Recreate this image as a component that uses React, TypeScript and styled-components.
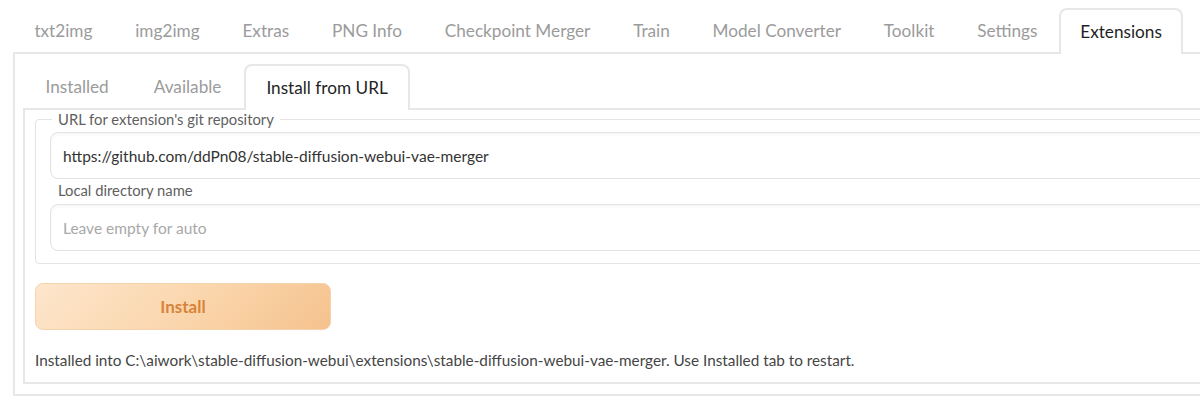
import React, { useState } from 'react';
import styled, { createGlobalStyle } from 'styled-components';

const GlobalStyle = createGlobalStyle`
  body {
    margin: 0;
    background: #ffffff;
    overflow: hidden;
    font-family: 'Lato', 'Liberation Sans', sans-serif;
  }
  * { box-sizing: border-box; }
`;

const topTabs = [
  'txt2img',
  'img2img',
  'Extras',
  'PNG Info',
  'Checkpoint Merger',
  'Train',
  'Model Converter',
  'Toolkit',
  'Settings',
  'Extensions',
];

const subTabs = ['Installed', 'Available', 'Install from URL'];

export default function App() {
  const [tab, setTab] = useState('Extensions');
  const [subTab, setSubTab] = useState('Install from URL');
  const [url, setUrl] = useState(
    'https://github.com/ddPn08/stable-diffusion-webui-vae-merger'
  );
  const [dirName, setDirName] = useState('');

  return (
    <>
      <GlobalStyle />
      <Page>
        <TabBar>
          {topTabs.map((t) => (
            <TabButton
              key={t}
              $active={t === tab}
              $pad={19.4}
              onClick={() => setTab(t)}
            >
              {t}
            </TabButton>
          ))}
        </TabBar>
        <OuterPanel>
          <TabBar>
            {subTabs.map((t) => (
              <TabButton
                key={t}
                $active={t === subTab}
                $pad={20.5}
                onClick={() => setSubTab(t)}
              >
                {t}
              </TabButton>
            ))}
          </TabBar>
          <InnerPanel>
            <Group>
              <Legend>URL for extension's git repository</Legend>
              <TextInput
                type="text"
                value={url}
                onChange={(e) => setUrl(e.target.value)}
              />
              <FieldLabel>Local directory name</FieldLabel>
              <TextInput
                type="text"
                placeholder="Leave empty for auto"
                value={dirName}
                onChange={(e) => setDirName(e.target.value)}
              />
            </Group>
            <InstallButton>Install</InstallButton>
            <Status>
              Installed into
              C:\aiwork\stable-diffusion-webui\extensions\stable-diffusion-webui-vae-merger.
              Use Installed tab to restart.
            </Status>
          </InnerPanel>
        </OuterPanel>
      </Page>
    </>
  );
}

const Page = styled.div`
  width: 1240px;
  padding: 8px 0 0 13px;
`;

const TabBar = styled.div`
  display: flex;
  height: 46px;
  border-bottom: 2px solid #e7e7e7;
`;

const TabButton = styled.button<{ $active: boolean; $pad: number }>`
  height: ${({ $active }) => ($active ? '46px' : '44px')};
  margin-bottom: ${({ $active }) => ($active ? '-2px' : '0')};
  padding: 0 ${({ $pad }) => $pad}px;
  border: 2px solid ${({ $active }) => ($active ? '#e7e7e7' : 'transparent')};
  border-bottom: none;
  border-radius: 8px 8px 0 0;
  background: #ffffff;
  font-family: 'Lato', 'Liberation Sans', sans-serif;
  font-size: 17.2px;
  line-height: 38px;
  color: ${({ $active }) => ($active ? '#1f1f1f' : '#9b9b9b')};
  cursor: pointer;
  white-space: nowrap;
`;

const OuterPanel = styled.div`
  border: 2px solid #e7e7e7;
  border-top: none;
  padding: 10px 0 10px 8px;
`;

const InnerPanel = styled.div`
  display: flex;
  flex-direction: column;
  align-items: flex-start;
  gap: 19px;
  border: 2px solid #e7e7e7;
  border-top: none;
  padding: 0 0 11px 10px;
`;

const Group = styled.fieldset`
  align-self: stretch;
  margin: 0;
  min-width: 0;
  padding: 4px 14px 12px;
  border: 1px solid #e4e4e4;
  border-radius: 4px;
`;

const Legend = styled.legend`
  margin-left: 2px;
  padding: 0 6px;
  font-size: 14.8px;
  line-height: 18px;
  color: #5f5f5f;
`;

const FieldLabel = styled.div`
  padding: 2px 0 0 8px;
  margin-bottom: 5px;
  font-size: 14.8px;
  line-height: 18px;
  color: #5f5f5f;
`;

const TextInput = styled.input`
  display: block;
  width: 100%;
  height: 47px;
  padding: 0 12px;
  border: 1px solid #e3e3e3;
  border-radius: 8px;
  background: #ffffff;
  box-shadow: inset 0 2px 3px rgba(0, 0, 0, 0.04);
  font-family: 'Lato', 'Liberation Sans', sans-serif;
  font-size: 15.5px;
  color: #333333;
  outline: none;
  &::placeholder {
    color: #a8a8a8;
  }
`;

const InstallButton = styled.button`
  width: 296px;
  height: 47px;
  border: 1px solid #f6d3ad;
  border-radius: 8px;
  background: linear-gradient(135deg, #fde6cc 0%, #fad5ab 55%, #f5c28d 100%);
  font-family: 'Lato', 'Liberation Sans', sans-serif;
  font-size: 17px;
  font-weight: 700;
  color: #d9823a;
  cursor: pointer;
`;

const Status = styled.div`
  font-size: 15.3px;
  line-height: 22px;
  color: #454545;
`;
